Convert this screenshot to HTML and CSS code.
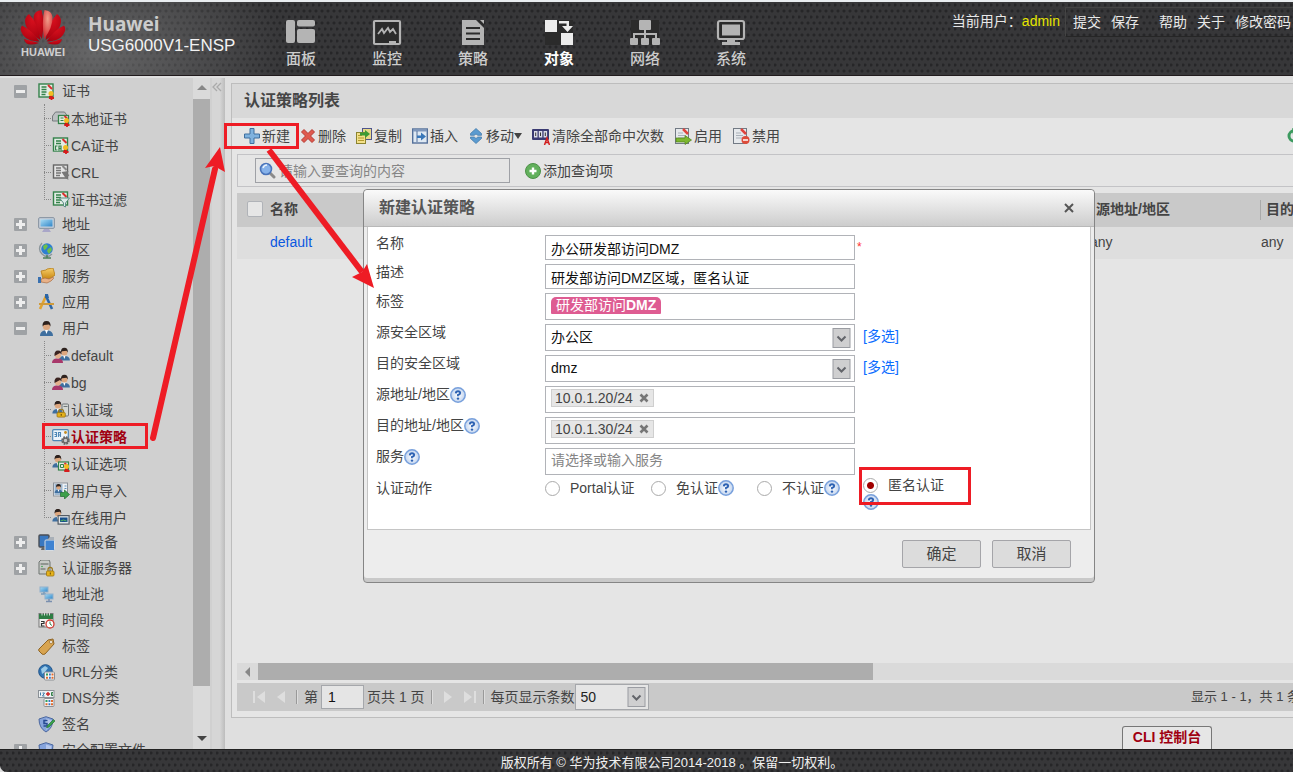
FILE: index.html
```html
<!DOCTYPE html>
<html lang="zh-CN">
<head>
<meta charset="utf-8">
<title>USG6000V1-ENSP</title>
<link rel="stylesheet" href="styles.css">
</head>
<body>
<svg class="defs" aria-hidden="true">
  <defs>
    <radialGradient id="petal" cx="50%" cy="20%" r="90%"><stop offset="0" stop-color="#d8101e"/><stop offset="1" stop-color="#a4000e"/></radialGradient>
    <radialGradient id="petal-hot" cx="50%" cy="30%" r="80%"><stop offset="0" stop-color="#f0a08c"/><stop offset="1" stop-color="#d01824"/></radialGradient>
    <linearGradient id="screen" x1="0" y1="0" x2="1" y2="1"><stop offset="0" stop-color="#a9dcf4"/><stop offset="1" stop-color="#2f86c9"/></linearGradient>
    <linearGradient id="gold" x1="0" y1="0" x2="0" y2="1"><stop offset="0" stop-color="#f7cf6a"/><stop offset="1" stop-color="#c98712"/></linearGradient>
    <radialGradient id="help-bg"><stop offset="0" stop-color="#ffffff"/><stop offset="1" stop-color="#c2d4ee"/></radialGradient>
    <g id="half-flower"><path d="M20.500 32Q5 23 5 13 5 9 9 6 18 15 20.500 32z"/><path d="M19.500 33.500Q7 33 3 27 -1 21 2 17.500 12 22 19.500 33.500z"/><path d="M19 35L4 31Q5 36.500 11 36.500 15 36.500 19 35z"/></g>
    <g id="person"><path d="M1 16q0-5 5-5.500h3q5 .5 5 5.500z" fill="#3f6f9f"/><path d="M6 10l1.500 4L9 10z" fill="#fff"/><circle cx="7.500" cy="6.500" r="3.600" fill="#dda77f"/><path d="M3.600 6.500Q3 1 7.500 1t4 5.500L10 4.500 5 5z" fill="#2d211d"/></g>
    <g id="lock"><path d="M2 4V2.500a2.200 2.200 0 0 1 4.400 0V4" fill="none" stroke="#9a7a20" stroke-width="1.200"/><rect x=".5" y="4" width="7.500" height="5" rx="1" fill="#e5b31c" stroke="#9a7210" stroke-width=".8"/><path d="M4.300 5.500v2" stroke="#6b4c00"/></g>
    <g id="seal"><path d="M3 3l1 5M3 3L2.500 7 1 6.500" stroke="#d51c1c" stroke-width="2"/><circle cx="3" cy="2.600" r="2.500" fill="#f2bd22"/><path d="M1 7h5M3.500 5v4" stroke="#d51c1c" stroke-width="1.800"/></g>
    <g id="sheet"><rect x="1" y="1" width="14" height="13" fill="#e2ece4" stroke="#34824a" stroke-width="1.400"/><path d="M3.500 4h5M3.500 6.500h5M3.500 9h5M3.500 11.500h4" stroke="#34824a" stroke-width="1.300"/></g>
    <g id="grid6"><rect x=".5" y=".5" width="10" height="8" rx="1" fill="#f4f6f7" stroke="#8b8f94"/><path d="M2 3h2" stroke="#2f9e5b" stroke-width="2"/><path d="M5 3h1.800M5 6.300h1.800" stroke="#3a76c4" stroke-width="2"/><path d="M7.500 3h2M7.500 6.300h2M2 6.300h2" stroke="#e06a2c" stroke-width="2"/></g>
    <symbol id="i-cert" viewBox="0 0 17 17"><use href="#sheet"/><path d="M10 2l4 4" stroke="#d93030" stroke-width="2"/><use href="#seal" x="10" y="8"/></symbol>
    <symbol id="i-local" viewBox="0 0 17 17"><path d="M0 6l3-4h9l3 4v5H0z" fill="#bcc0c2" stroke="#777b7e"/><rect x="6" y="5.500" width="10" height="8" fill="#e2ece4" stroke="#34824a" stroke-width="1.300"/><path d="M8 8h3M8 10.500h3" stroke="#34824a"/><path d="M12 6l3 3" stroke="#d93030" stroke-width="2"/><use href="#seal" x="11" y="8"/></symbol>
    <symbol id="i-ca" viewBox="0 0 17 17"><use href="#sheet"/><rect x="2" y="8" width="7" height="6" fill="#e2ece4"/><path d="M5 9H3v4h2M6.500 14V9h2v5M6.500 11.500h2" fill="none" stroke="#34824a" stroke-width="1.200"/><path d="M10 2l4 4" stroke="#d93030" stroke-width="2"/><use href="#seal" x="10" y="8"/></symbol>
    <symbol id="i-crl" viewBox="0 0 17 17"><rect x="1" y="1" width="14" height="13" fill="#e4e4e4" stroke="#666" stroke-width="1.400"/><path d="M3.500 4h5M3.500 6.500h5M3.500 9h5M3.500 11.500h4" stroke="#777" stroke-width="1.300"/><path d="M10 2l4 4" stroke="#888" stroke-width="2"/><path d="M9 8l7-1-1 3 2 1-2 2 1 3-3-2z" fill="#777"/></symbol>
    <symbol id="i-filter" viewBox="0 0 17 17"><use href="#sheet"/><path d="M10 2l4 4" stroke="#d93030" stroke-width="2"/><path d="M7 7h10l-4 5v4l-2-1v-3z" fill="#dcebe8" stroke="#5e8f86"/></symbol>
    <symbol id="i-monitor" viewBox="0 0 17 17"><rect x=".7" y="1.700" width="15.600" height="10.600" rx="1" fill="#c9d3de" stroke="#7f8c9c"/><rect x="2.500" y="3.500" width="12" height="7" fill="url(#screen)"/><path d="M6 13h5l2 3H4z" fill="#a9a6c8"/></symbol>
    <symbol id="i-globe" viewBox="0 0 17 17"><path d="M4 1Q-1 7 4 12t10 0" fill="none" stroke="#8c969c" stroke-width="1.300"/><circle cx="9" cy="7" r="5.800" fill="#2f7fd0"/><path d="M5 4l3-2 2 2-2 3-2 1zM10 7l3-2 1 3-3 4-2-3z" fill="#6fc04a"/><path d="M9 13v3M5 16h8" stroke="#4e7f5a" stroke-width="1.500"/></symbol>
    <symbol id="i-service" viewBox="0 0 17 17"><path d="M3 3l5-1 1-1 6-1 2 7-5 4H5z" fill="url(#gold)" stroke="#b57c18" stroke-width=".8"/><path d="M3 11l4-1 4 1 4-2q2 1-2 4l-4 2-6-1z" fill="#e9b288" stroke="#a86f45" stroke-width=".7"/><path d="M0 9h3v6H0z" fill="#3971b0"/></symbol>
    <symbol id="i-app" viewBox="0 0 17 17"><path d="M8 2L2 15" stroke="#e0a330" stroke-width="2.600"/><path d="M8 2l6 13" stroke="#2c66a6" stroke-width="2.600"/><path d="M1 10h15" stroke="#cf9a3b" stroke-width="2"/><path d="M7 0h3l1 4H7z" fill="#2c66a6"/></symbol>
    <symbol id="i-user" viewBox="0 0 17 17"><use href="#person" x="1"/></symbol>
    <symbol id="i-users" viewBox="0 0 18 17"><g transform="translate(6 0) scale(.85)"><use href="#person"/></g><path d="M0 16q0-4 4-4.500h3q4 .5 4 4.500z" fill="#a8386a"/><circle cx="6" cy="8.500" r="3" fill="#e3b08c"/><path d="M2.500 9Q2 3.500 6 3.500t3.500 4L8 6z" fill="#3b2320"/></symbol>
    <symbol id="i-userlock" viewBox="0 0 17 17"><g transform="translate(-1 -1) scale(.85)"><use href="#person"/></g><rect x="9.500" y="3" width="6.500" height="12" rx="1" fill="#d3d7d3" stroke="#71777a"/><path d="M11 5.500h4" stroke="#71777a"/><g transform="translate(4 8) scale(1.100 .9)"><use href="#lock"/></g></symbol>
    <symbol id="i-policy" viewBox="0 0 18 17"><rect x=".7" y="1.700" width="15.600" height="11" rx="1" fill="#edf4fa" stroke="#4d86b4" stroke-width="1.200"/><path d="M2.500 4.500h2v4h-2M2.500 6.500h2M6.500 9V4.500h2V9M6.500 7h2" fill="none" stroke="#4d86b4" stroke-width="1.100"/><circle cx="13.500" cy="4.500" r="1.400" fill="#c58c22"/><circle cx="13.500" cy="12.500" r="3.300" fill="#c9c9c9" stroke="#666" stroke-width="2" stroke-dasharray="1.700 .9"/><circle cx="13.500" cy="12.500" r="2.400" fill="none" stroke="#666" stroke-width="1.300"/></symbol>
    <symbol id="i-useropt" viewBox="0 0 17 17"><g transform="translate(-1 -1) scale(.85)"><use href="#person"/></g><rect x="6" y="7" width="10" height="8" fill="#e2ece4" stroke="#34824a" stroke-width="1.200"/><path d="M8 9.500h3v3H8z" fill="none" stroke="#34824a"/><path d="M12 8l3 3" stroke="#d93030" stroke-width="2"/><use href="#seal" x="11" y="9"/></symbol>
    <symbol id="i-userimport" viewBox="0 0 17 17"><rect x="1" y="1" width="14" height="13" fill="#eef1f4" stroke="#8b929a"/><rect x="2" y="2" width="8" height="11" fill="#9db7d0"/><g transform="translate(1.500 1.500) scale(.6)"><use href="#person"/></g><path d="M12 4h2M12 6.500h2" stroke="#5a8fc0"/><path d="M8 10.500h4V8l5 4.500-5 4.500v-2.500H8z" fill="#3da04a" stroke="#227030" stroke-width=".7"/></symbol>
    <symbol id="i-useronline" viewBox="0 0 17 17"><g transform="translate(-1 -1) scale(.85)"><use href="#person"/></g><rect x="5.600" y="6.600" width="11" height="8.500" fill="#dfe5ea" stroke="#555c64" stroke-width="1.200"/><rect x="7.500" y="8.500" width="7.500" height="4.500" fill="#174f8c"/><path d="M8 12l3-1 3 1" stroke="#58b85a" fill="none"/></symbol>
    <symbol id="i-devices" viewBox="0 0 17 17"><rect x="1" y="1" width="10" height="12" rx="1" fill="#3a78c0" stroke="#4a4e55" stroke-width="1.400"/><path d="M3 16h5v-3H4z" fill="#666"/><rect x="7" y="6" width="9.500" height="10.500" rx="1" fill="#3f83d2" stroke="#d8dde2"/><path d="M9 6l3-3h4v3" fill="#a9b0b8"/></symbol>
    <symbol id="i-authserver" viewBox="0 0 17 17"><path d="M1 2l2-2h8l1 2v12H1z" fill="#c7cac7" stroke="#6f7471"/><path d="M2.500 4h8M2.500 9h5" stroke="#5b615d" stroke-width="1.200"/><circle cx="4" cy="6.500" r=".8" fill="#39a24c"/><use href="#lock" x="8" y="7"/></symbol>
    <symbol id="i-pool" viewBox="0 0 17 17"><rect x="2" y="1" width="8" height="5" fill="url(#screen)" stroke="#8fb0cc"/><path d="M3 8h5M6 6v2" stroke="#7a9ab8" stroke-width="1.500"/><rect x="7" y="8" width="8" height="5" fill="url(#screen)" stroke="#8fb0cc"/><path d="M8 15.500h6M11 13v2" stroke="#7a8fae" stroke-width="1.500"/></symbol>
    <symbol id="i-calendar" viewBox="0 0 17 17"><rect x="1" y="1.500" width="14" height="13.500" fill="#f1f1ef" stroke="#777"/><path d="M1 2h14v5H1z" fill="#2e7d44"/><path d="M4 .5v3M6.500 .5v3M9 .5v3M11.500 .5v3" stroke="#d6ded8"/><path d="M3 9.500h3v2H3.500v2.500H6.500" fill="none" stroke="#333" stroke-width="1.200"/><circle cx="12" cy="12" r="4" fill="#fff" stroke="#cf3a30" stroke-width="1.300"/><path d="M12 9.500V12l2 1.500" fill="none" stroke="#348048"/></symbol>
    <symbol id="i-tag" viewBox="0 0 17 17"><path d="M1 11L10 2l5-1 1 5-9 10q-2 1-3 0l-3-3q-.8-1 0-2z" fill="#d8a450" stroke="#8f6424"/><circle cx="13" cy="4" r="1.500" fill="#fff" stroke="#8f6424" stroke-width=".7"/></symbol>
    <symbol id="i-url" viewBox="0 0 17 17"><circle cx="7.500" cy="7.500" r="6.800" fill="#3276b4" stroke="#1f5389"/><path d="M3 5l4-3 3 2-3 4-3 2zM9 3l4 1" fill="#9ccbe8"/><use href="#grid6" x="6" y="7.500"/></symbol>
    <symbol id="i-dns" viewBox="0 0 17 17"><rect x=".5" y=".5" width="15.500" height="7" fill="#edf1f3" stroke="#8a9096"/><path d="M2.500 2.500v3M4.500 3h2l-2 3h2" fill="none" stroke="#3d7ba9"/><path d="M8 4h4M10 2v4" stroke="#ce2323" stroke-width="1.400"/><path d="M15 2.500h-1.500v3H15M13.500 4H15" fill="none" stroke="#348048"/><use href="#grid6" x="5.500" y="8"/></symbol>
    <symbol id="i-shield" viewBox="0 0 17 17"><path d="M8 .7l7 2.300q0 9-7 13Q1 12 1 3z" fill="#86a4dc" stroke="#4c689f"/><path d="M8 2.500l5.500 1.800Q13 10 8 14z" fill="#b6c8ec"/></symbol>
    <symbol id="i-sign" viewBox="0 0 17 17"><path d="M8 .7l7 2.300q0 9-7 13Q1 12 1 3z" fill="#86a4dc" stroke="#4c689f"/><path d="M8 2.500l5.500 1.800Q13 10 8 14z" fill="#b6c8ec"/><path d="M9.500 4.500H6V7.500h3V10H5.500" fill="none" stroke="#274a91" stroke-width="1.500"/><path d="M8.500 12l1-2.500 6-6 1.500 1.500-6 6z" fill="#38a04a" stroke="#216b2e" stroke-width=".6"/></symbol>
    <symbol id="i-add" viewBox="0 0 16 16"><path d="M6 .5h4V6h5.500v4H10v5.500H6V10H.5V6H6z" fill="#7fb2de" stroke="#3f6f9e"/></symbol>
    <symbol id="i-del" viewBox="0 0 16 16"><path d="M1.500 4L4 1.500l4 4 4-4L14.500 4l-4 4 4 4-2.500 2.500-4-4-4 4L1.500 12l4-4z" fill="#e05a4e" stroke="#b53a32"/></symbol>
    <symbol id="i-copy" viewBox="0 0 16 16"><rect x="6.500" y=".5" width="9" height="11" fill="#e9d98a" stroke="#4f558c"/><rect x=".5" y="4.500" width="9" height="11" fill="#f3e08a" stroke="#8c8430"/><path d="M2 7.500h4M2 10h6M2 12.500h6" stroke="#b39a2c"/><path d="M4 4.500h5V2l5 4-5 4V7.500H4z" fill="#3d9b35"/></symbol>
    <symbol id="i-insert" viewBox="0 0 16 16"><rect x=".7" y="1" width="14.600" height="14" fill="#dfe9f3" stroke="#54709a" stroke-width="1.400"/><path d="M1 2.500h14" stroke="#8099bd" stroke-width="2"/><path d="M5 3v11" stroke="#54709a"/><path d="M5 7.500h4V4.500l5 4-5 4v-2.500H5z" fill="#3977b8"/></symbol>
    <symbol id="i-move" viewBox="0 0 16 16"><path d="M8 .5l5.500 5v1.800H9.800L8 6 6.200 7.300H2.500V5.500zM8 15.500l5.500-5V9H9.800L8 10.500 6.200 9H2.500v1.500z" fill="#5b9bd0" stroke="#3c76a8" stroke-width=".7"/></symbol>
    <symbol id="i-clear" viewBox="0 0 18 18"><rect x="0" y="2" width="17" height="11" rx="1" fill="#3a3a72"/><path d="M2 4h3.500v6.500H2zM6.800 4h3.500v6.500H6.800zM11.600 4h3.500v6.500h-3.500z" fill="#dcdce8"/><path d="M3.700 5.500v3.500M8.500 5.500v3.500M13.300 5.500v3.500" stroke="#333"/><path d="M12.500 18l2.500-7 2.500 7M13.500 15.500h3" fill="none" stroke="#d11c1c" stroke-width="1.500"/></symbol>
    <g id="doc"><rect x="1.500" y="1.500" width="13" height="15" fill="#e6e9ec" stroke="#727a84"/><path d="M4 6h5M4 8.500h7M4 11h7" stroke="#a9b0b8"/><path d="M9 2l5 5" stroke="#e0443c" stroke-width="2.500"/></g>
    <symbol id="i-enable" viewBox="0 0 18 18"><use href="#doc"/><path d="M2 11h9V8.500l6.500 4.500-6.500 4.500V15H2z" fill="#7db72f" stroke="#4c7f18" stroke-width=".7"/></symbol>
    <symbol id="i-disable" viewBox="0 0 18 18"><use href="#doc"/><circle cx="13.500" cy="13" r="4" fill="#dd4b39"/><path d="M11 13h5" stroke="#fff" stroke-width="1.500"/></symbol>
    <symbol id="i-search" viewBox="0 0 17 17"><path d="M10.500 10.500l4.500 4.500" stroke="#8a8a8a" stroke-width="3" stroke-linecap="round"/><circle cx="7" cy="7" r="5.500" fill="#86b2ea" stroke="#4a74ba" stroke-width="1.600"/><path d="M4 6q1-3 4-3" stroke="#e9f2fd" stroke-width="1.500" fill="none"/></symbol>
    <symbol id="i-plus" viewBox="0 0 16 16"><circle cx="8" cy="8" r="7.500" fill="#62b05c" stroke="#4c9147"/><path d="M8 4.500v7M4.500 8h7" stroke="#fff" stroke-width="2.400"/></symbol>
    <symbol id="i-help" viewBox="0 0 16 16"><circle cx="8" cy="8" r="7.200" fill="url(#help-bg)" stroke="#78a0dc" stroke-width="1.500"/><path d="M5.800 6.300Q6 4.300 8 4.300t2.200 1.700Q10.200 7.300 8 8v1.300" fill="none" stroke="#2d62b3" stroke-width="1.900"/><circle cx="8" cy="11.600" r="1.200" fill="#2d62b3"/></symbol>
    <symbol id="i-chev" viewBox="0 0 18 20"><rect x=".5" y=".5" width="17" height="19" fill="#cfcfd0" stroke="#9a9ca2"/><path d="M5 8.500l4 4 4-4" fill="none" stroke="#63656a" stroke-width="2"/></symbol>
  </defs>
</svg>

<header class="top">
  <div class="brand">
    <svg class="logo" viewBox="0 0 46 48" role="img" aria-label="HUAWEI">
      <g fill="url(#petal)">
        <path d="M22 31Q13 19 13.500 9 14.500 2.500 21.500 2 25 13 22 31z"/>
        <use href="#half-flower"/>
        <use href="#half-flower" transform="translate(46 0) scale(-1 1)"/>
      </g>
      <path fill="url(#petal-hot)" d="M24 31Q33 19 32.500 9 31.500 2.500 24.500 2 21.500 13 24 31z"/>
      <text class="logo-text" x="23" y="48" text-anchor="middle">HUAWEI</text>
    </svg>
    <div><strong class="vendor">Huawei</strong><span class="model">USG6000V1-ENSP</span></div>
  </div>
  <nav class="nav">
    <a href="#"><svg viewBox="0 0 30 28"><g fill="#b4b4b4"><rect y="1" width="9" height="23" rx="2"/><rect x="11" y="1" width="18" height="6.500" rx="2"/><rect x="11" y="10" width="18" height="14" rx="2"/></g></svg>面板</a>
    <a href="#"><svg viewBox="0 0 30 28"><rect x="2" y="2" width="26" height="23" rx="1" fill="#2b2b2b" stroke="#b4b4b4" stroke-width="2.200"/><path d="M6 15l4-5 2 4 4-5 2 4 3-3 3 5" fill="none" stroke="#b4b4b4" stroke-width="1.800"/><path d="M17 25v-3h7v3" fill="#b4b4b4"/></svg>监控</a>
    <a href="#"><svg viewBox="0 0 30 28"><path d="M4 1h14l8 8v17H4z" fill="#b4b4b4"/><path d="M19 1h7v7z" fill="#2b2b2b"/><path d="M22 1h4v4z" fill="#b4b4b4"/><path d="M8 9h14M8 14.500h14M8 20h14" stroke="#2b2b2b" stroke-width="2.200"/></svg>策略</a>
    <a href="#" class="on"><svg viewBox="0 0 30 28"><path d="M1 1h28v25H1z" fill="#2b2b2b"/><g fill="#ececec"><rect x="1" y="1" width="12" height="12"/><rect x="17" y="14" width="12" height="12"/><path d="M15 2h10v5h4l-5.500 6L18 7h4.500V4.500H15z"/></g></svg>对象</a>
    <a href="#"><svg viewBox="0 0 30 28"><path d="M1 1h28v25H1z" fill="#2b2b2b"/><g fill="#b4b4b4"><rect x="9" y="1" width="12" height="10" rx="1"/><rect y="19" width="8" height="7" rx="1"/><rect x="11" y="19" width="8" height="7" rx="1"/><rect x="22" y="19" width="8" height="7" rx="1"/></g><path d="M4 20v-5h22v5M15 10v10" fill="none" stroke="#b4b4b4" stroke-width="2"/></svg>网络</a>
    <a href="#"><svg viewBox="0 0 30 28"><rect x="2" y="2" width="26" height="18" rx="2" fill="#2b2b2b" stroke="#b4b4b4" stroke-width="2.200"/><rect x="6" y="5.500" width="18" height="11" fill="#b4b4b4"/><path d="M11 20h8v3h5v3H6v-3h5z" fill="#b4b4b4"/></svg>系统</a>
  </nav>
  <div class="account">
    <span>当前用户：<a class="who" href="#">admin</a></span>
    <div class="links"><a href="#">提交</a><a href="#">保存</a><a class="help-link" href="#">帮助</a><a href="#">关于</a><a href="#">修改密码</a></div>
  </div>
</header>

<div class="work">
  <aside class="side">
    <ul class="tree">
      <li><div class="node"><button class="tg minus" aria-label="收起"></button><svg><use href="#i-cert"/></svg>证书</div>
        <ul class="sub">
          <li><svg><use href="#i-local"/></svg>本地证书</li>
          <li><svg><use href="#i-ca"/></svg>CA证书</li>
          <li><svg><use href="#i-crl"/></svg>CRL</li>
          <li><svg><use href="#i-filter"/></svg>证书过滤</li>
        </ul></li>
      <li><div class="node"><button class="tg" aria-label="展开"></button><svg><use href="#i-monitor"/></svg>地址</div></li>
      <li><div class="node"><button class="tg" aria-label="展开"></button><svg><use href="#i-globe"/></svg>地区</div></li>
      <li><div class="node"><button class="tg" aria-label="展开"></button><svg><use href="#i-service"/></svg>服务</div></li>
      <li><div class="node"><button class="tg" aria-label="展开"></button><svg><use href="#i-app"/></svg>应用</div></li>
      <li><div class="node"><button class="tg minus" aria-label="收起"></button><svg><use href="#i-user"/></svg>用户</div>
        <ul class="sub">
          <li><svg><use href="#i-users"/></svg>default</li>
          <li><svg><use href="#i-users"/></svg>bg</li>
          <li><svg><use href="#i-userlock"/></svg>认证域</li>
          <li class="current"><svg><use href="#i-policy"/></svg>认证策略</li>
          <li><svg><use href="#i-useropt"/></svg>认证选项</li>
          <li><svg><use href="#i-userimport"/></svg>用户导入</li>
          <li><svg><use href="#i-useronline"/></svg>在线用户</li>
        </ul></li>
      <li><div class="node"><button class="tg" aria-label="展开"></button><svg><use href="#i-devices"/></svg>终端设备</div></li>
      <li><div class="node"><button class="tg" aria-label="展开"></button><svg><use href="#i-authserver"/></svg>认证服务器</div></li>
      <li><div class="node leaf"><svg><use href="#i-pool"/></svg>地址池</div></li>
      <li><div class="node leaf"><svg><use href="#i-calendar"/></svg>时间段</div></li>
      <li><div class="node leaf"><svg><use href="#i-tag"/></svg>标签</div></li>
      <li><div class="node leaf"><svg><use href="#i-url"/></svg>URL分类</div></li>
      <li><div class="node leaf"><svg><use href="#i-dns"/></svg>DNS分类</div></li>
      <li><div class="node leaf"><svg><use href="#i-sign"/></svg>签名</div></li>
      <li><div class="node"><button class="tg" aria-label="展开"></button><svg><use href="#i-shield"/></svg>安全配置文件</div></li>
    </ul>
    <div class="vbar"><span class="tri up"></span><span class="vthumb"></span><span class="tri down"></span></div>
    <div class="split"><button aria-label="折叠"><svg viewBox="0 0 10 10"><path d="M5 1L1 5l4 4M9 1L5 5l4 4" fill="none" stroke="#aaa" stroke-width="1.300"/></svg></button></div>
  </aside>

  <main class="main">
    <section class="panel">
      <h1 class="title">认证策略列表</h1>
      <div class="tools">
        <button><svg><use href="#i-add"/></svg>新建</button>
        <button><svg><use href="#i-del"/></svg>删除</button>
        <button><svg><use href="#i-copy"/></svg>复制</button>
        <button><svg><use href="#i-insert"/></svg>插入</button>
        <button><svg><use href="#i-move"/></svg>移动<span class="drop"></span></button>
        <button class="wide"><svg><use href="#i-clear"/></svg>清除全部命中次数</button>
        <button class="wide"><svg><use href="#i-enable"/></svg>启用</button>
        <button class="wide"><svg><use href="#i-disable"/></svg>禁用</button>
        <button class="refresh" aria-label="刷新"><svg viewBox="0 0 16 16"><path d="M8 3a5 5 0 1 0 5 5" fill="none" stroke="#3c9a5f" stroke-width="3"/><path d="M6 0l7 3-6 4z" fill="#3c9a5f"/></svg></button>
      </div>
      <div class="query">
        <label class="search"><svg><use href="#i-search"/></svg><input type="text" placeholder="请输入要查询的内容" aria-label="查询"></label>
        <button class="add-query"><svg><use href="#i-plus"/></svg>添加查询项</button>
      </div>
      <div class="grid">
        <table>
          <colgroup><col class="c-check"><col class="c-name"><col class="c-src"><col class="c-dst"></colgroup>
          <thead><tr><th><input type="checkbox" aria-label="全选"></th><th>名称</th><th class="src">源地址/地区</th><th class="dst"><span>目的地址/地区</span></th></tr></thead>
          <tbody><tr><td></td><td><a href="#">default</a></td><td>any</td><td>any</td></tr></tbody>
        </table>
      </div>
      <div class="hbar"><span class="tri left"></span><span class="hthumb"></span></div>
      <div class="pager">
        <button aria-label="首页"><svg viewBox="0 0 14 14"><path d="M1 1v12h2V1zM13 1v12L5 7z"/></svg></button>
        <button class="slim" aria-label="上一页"><svg viewBox="0 0 14 14"><path d="M11 1v12L3 7z"/></svg></button>
        <i class="sep"></i>
        <label class="page-no">第<input type="text" value="1"></label>
        <span>页共 1 页</span>
        <i class="sep"></i>
        <button class="slim" aria-label="下一页"><svg viewBox="0 0 14 14"><path d="M3 1v12l8-6z"/></svg></button>
        <button aria-label="末页"><svg viewBox="0 0 14 14"><path d="M1 1v12l8-6zM11 1v12h2V1z"/></svg></button>
        <i class="sep"></i>
        <label class="per-page">每页显示条数<span class="pick"><select><option>50</option></select><svg><use href="#i-chev"/></svg></span></label>
        <span class="total">显示 1 - 1，共 1 条</span>
      </div>
    </section>
    <div class="cli-row"><button class="cli">CLI 控制台</button></div>
  </main>
</div>

<footer class="foot">版权所有 © 华为技术有限公司2014-2018 。保留一切权利。</footer>

<form class="dialog" role="dialog" aria-labelledby="dlg-title">
  <div class="dlg-head"><h2 id="dlg-title">新建认证策略</h2><button type="button" aria-label="关闭"><svg viewBox="0 0 10 10"><path d="M1 1l8 8M9 1L1 9" stroke="#555" stroke-width="2"/></svg></button></div>
  <div class="dlg-body">
    <div class="row"><label for="f-name">名称</label><input id="f-name" type="text" value="办公研发部访问DMZ"><span class="must">*</span></div>
    <div class="row"><label for="f-desc">描述</label><input id="f-desc" type="text" value="研发部访问DMZ区域，匿名认证"></div>
    <div class="row"><span>标签</span><div class="box"><span class="tag">研发部访问<b>DMZ</b></span></div></div>
    <div class="row"><label for="f-sz">源安全区域</label><span class="pick"><select id="f-sz"><option>办公区</option></select><svg><use href="#i-chev"/></svg></span><a href="#">[多选]</a></div>
    <div class="row"><label for="f-dz">目的安全区域</label><span class="pick"><select id="f-dz"><option>dmz</option></select><svg><use href="#i-chev"/></svg></span><a href="#">[多选]</a></div>
    <div class="row"><span class="with-help">源地址/地区<svg><use href="#i-help"/></svg></span><div class="box"><span class="chip">10.0.1.20/24<button type="button" aria-label="移除"><svg viewBox="0 0 10 10"><path d="M1.500 1.500l7 7M8.500 1.500l-7 7" stroke="#777" stroke-width="2.600"/></svg></button></span></div></div>
    <div class="row"><span class="with-help">目的地址/地区<svg><use href="#i-help"/></svg></span><div class="box"><span class="chip">10.0.1.30/24<button type="button" aria-label="移除"><svg viewBox="0 0 10 10"><path d="M1.500 1.500l7 7M8.500 1.500l-7 7" stroke="#777" stroke-width="2.600"/></svg></button></span></div></div>
    <div class="row"><label class="with-help" for="f-svc">服务<svg><use href="#i-help"/></svg></label><input class="svc" id="f-svc" type="text" placeholder="请选择或输入服务"></div>
    <div class="row actions"><span>认证动作</span>
      <div class="radios">
        <label><input type="radio" name="act">Portal认证</label>
        <label><input type="radio" name="act">免认证<svg><use href="#i-help"/></svg></label>
        <label><input type="radio" name="act">不认证<svg><use href="#i-help"/></svg></label>
        <label class="wrap"><input type="radio" name="act" checked>匿名认证<svg><use href="#i-help"/></svg></label>
      </div>
    </div>
  </div>
  <div class="dlg-foot"><button type="button">确定</button><button type="button">取消</button></div>
</form>

<svg class="marks" aria-hidden="true">
  <g fill="none" stroke="#ee1c25" stroke-width="3">
    <rect x="225.500" y="124.500" width="72" height="23"/>
    <rect x="43.500" y="424.500" width="103" height="23"/>
    <rect x="860.500" y="468.500" width="109" height="35"/>
  </g>
  <g stroke="#ee1c25" stroke-width="6" fill="#ee1c25">
    <path d="M153 438L215 169" stroke-linecap="round"/>
    <path d="M269 150L362 272"/>
    <path d="M220 147l-15 21 9-2 11 6z" stroke="none"/>
    <path d="M374 288l-7-24-5 8-10 5z" stroke="none"/>
  </g>
</svg>
</body>
</html>
```

FILE: styles.css
```css
* { box-sizing: border-box; }
html, body { height: 100%; }
body {
  margin: 0;
  display: flex;
  flex-direction: column;
  overflow: hidden;
  position: relative;
  background: #dfdfdf;
  color: #444;
  font: 14px/18px "Liberation Sans", "Noto Sans CJK SC", sans-serif;
}
button, input, select { font: inherit; color: inherit; margin: 0; }
button { border: 0; padding: 0; background: none; cursor: pointer; white-space: nowrap; }
a { color: inherit; text-decoration: none; }
ul { list-style: none; margin: 0; padding: 0; }
svg { display: block; flex: none; }
.defs { position: absolute; width: 0; height: 0; }

/* header */
.top, .foot {
  background-color: #373739;
  background-image:
    radial-gradient(circle at 1px 3px, #262628 1px, transparent 2px),
    radial-gradient(circle at 4px 9px, #262628 1px, transparent 2px);
  background-size: 6px 12px;
}
.top {
  flex: none;
  height: 76px;
  display: flex;
  color: #e8e8e8;
  border-top: 2px solid #e9edf0;
  border-bottom: 1px solid #201a1c;
  background-image:
    radial-gradient(ellipse 190px 120px at 95px 50px, rgba(150,150,150,.5), transparent),
    radial-gradient(circle at 1px 3px, #262628 1px, transparent 2px),
    radial-gradient(circle at 4px 9px, #262628 1px, transparent 2px);
  background-size: auto, 6px 12px, 6px 12px;
}
.brand { flex: none; width: 258px; padding: 6px 0 0 20px; display: flex; gap: 22px; }
.logo { width: 46px; height: 48px; overflow: visible; }
.logo-text { font: bold 11px "Liberation Sans", sans-serif; fill: #cfcfcf; }
.vendor { display: block; margin-top: 4px; font: bold 19px/24px "Noto Sans", sans-serif; color: #ccc; }
.model { display: block; font-size: 17px; line-height: 20px; color: #f2f2f2; }
.nav { display: flex; }
.nav a {
  width: 86px; padding-top: 17px;
  display: flex; flex-direction: column; align-items: center; gap: 2px;
  font-size: 15px; line-height: 20px; font-weight: 500; color: #ccc;
}
.nav svg { width: 30px; height: 28px; }
.nav .on { color: #fff; font-weight: bold; }
.account { margin-left: auto; display: flex; align-items: flex-start; gap: 5px; padding-top: 5px; line-height: 29px; white-space: nowrap; }
.who { color: #e6e600; }
.links { display: flex; gap: 10px; padding: 0 2px 0 7px; height: 30px; border: 1px solid #444; border-right: 0; border-bottom-color: #262626; }
.links .help-link { margin-left: 10px; }

/* work area */
.work { flex: 1; min-height: 0; display: flex; padding-top: 2px; }
.side { flex: none; width: 225px; display: flex; background: #d0d0d0; overflow: hidden; }
.tree { width: 193px; flex: none; white-space: nowrap; }
.node { height: 26px; padding-left: 14px; display: flex; align-items: center; gap: 7px; }
.node svg, .sub svg { width: 17px; height: 17px; }
.leaf { padding-left: 38px; }
.tg {
  width: 13px; height: 13px; margin-right: 4px; border-radius: 1px;
  background:
    linear-gradient(#eee, #eee) center / 9px 3px no-repeat,
    linear-gradient(#eee, #eee) center / 3px 9px no-repeat,
    #9fa2a5;
}
.tg.minus { background: linear-gradient(#eee, #eee) center / 9px 3px no-repeat, #9fa2a5; }
.sub { margin: 0 0 -2px 44px; padding-top: 1px; position: relative; }
.sub::before { content: ""; position: absolute; left: 0; top: 0; bottom: 13px; border-left: 1px dotted #888; }
.sub li { height: 27px; display: flex; align-items: center; gap: 1px; }
.sub li::before { content: ""; width: 7px; border-top: 1px dotted #888; }
.sub svg { width: 18px; }
.sub .current { color: #a00010; font-weight: bold; }
.vbar { width: 17px; display: flex; flex-direction: column; align-items: center; background: #dadada; }
.vthumb { width: 17px; flex: 1; margin: 9px 0 50px; background: #adadad; }
.tri { width: 0; height: 0; border: 5px solid transparent; }
.up { margin-top: 3px; border-bottom-color: #888; border-top-width: 4px; }
.down { border-top-color: #444; margin-bottom: 3px; }
.split { flex: 1; margin-left: 2px; background: linear-gradient(90deg, #d6d6d6 60%, #bcbcbc); }
.split button { width: 10px; height: 18px; display: flex; align-items: center; }
.split svg { width: 10px; height: 10px; }

.main { flex: 1; min-width: 0; display: flex; flex-direction: column; padding: 5px 0 0 6px; }
.panel { flex: 1; min-height: 0; display: flex; flex-direction: column; padding-bottom: 6px; background: #e5e5e5; border: 1px solid #bdbdbd; border-right: 0; }
.title { margin: 0; padding: 1px 12px; font-size: 16px; line-height: 32px; color: #464646; background: #d8d8d8; }
.tools { height: 36px; display: flex; align-items: center; gap: 10px; padding-left: 12px; }
.tools button, .add-query { display: flex; align-items: center; gap: 2px; }
.tools svg { width: 16px; height: 16px; }
.tools .wide svg { width: 18px; height: 18px; }
.drop { border: 4px solid transparent; border-top: 6px solid #444; border-bottom: 0; margin-left: -2px; }
.tools .refresh { margin-left: auto; width: 7px; overflow: hidden; }
.query { height: 33px; margin: 0 0 6px 5px; padding-left: 17px; display: flex; align-items: center; gap: 15px; border: 1px solid #c3c3c6; border-right: 0; }
.search { width: 255px; height: 25px; display: flex; align-items: center; gap: 3px; padding-left: 3px; border: 1px solid #9fa1a6; }
.search svg { width: 17px; height: 17px; }
.search input { flex: 1; min-width: 0; padding: 0; border: 0; background: none; outline: 0; }
::placeholder { color: #858585; opacity: 1; }
.add-query svg { width: 16px; height: 16px; }
.grid { flex: 1; margin-left: 5px; overflow: hidden; }
table { width: 100%; table-layout: fixed; border-collapse: collapse; white-space: nowrap; }
.c-check { width: 28px; }
.c-src { width: 171px; }
.c-dst { width: 32px; }
th { height: 34px; padding: 0 0 2px 5px; text-align: left; color: #444; background: #c9c9c9; }
td { height: 32px; padding: 0 0 2px; background: #dedede; }
th:first-child { padding-left: 10px; }
td:nth-child(2) { padding-left: 5px; }
.src { padding-left: 6px; background: linear-gradient(#aaa, #aaa) right center / 1px 20px no-repeat, #c9c9c9; }
.dst { overflow: hidden; }
.dst span { display: block; line-height: 20px; }
td a { color: #0a57e0; }
input[type=checkbox] { display: block; appearance: none; width: 16px; height: 16px; border: 1px solid #b0b3b8; border-radius: 2px; background: #e6e6e6; }
.hbar { height: 17px; margin: 0 0 3px 5px; display: flex; align-items: center; background: #dadada; }
.left { border-right-color: #888; margin: 0 8px 0 3px; }
.hthumb { width: 615px; height: 17px; background: #adadad; }
.pager { height: 28px; margin-left: 5px; padding-left: 15px; display: flex; align-items: center; gap: 6px; background: #c9c9c9; white-space: nowrap; }
.pager button svg { width: 14px; height: 14px; fill: #dedede; }
.pager .slim { margin: 0 2px; }
.sep { width: 2px; height: 14px; border-left: 1px solid #999; border-right: 1px solid #ddd; }
.page-no { display: flex; align-items: center; gap: 3px; }
.page-no + span { margin-left: -3px; }
.page-no input { width: 43px; height: 24px; padding: 0 6px; border: 1px solid #a5a7ab; background: #e5e5e5; color: #111; }
.per-page { display: flex; align-items: center; }
.total { margin-left: auto; width: 102px; overflow: hidden; font-size: 13px; }
.pick { display: grid; }
.pick select { grid-area: 1 / 1; width: 100%; appearance: none; border: 1px solid #b1b3b8; border-radius: 0; padding: 0 5px; color: #222; background: #fff; }
.pick svg { grid-area: 1 / 1; justify-self: end; align-self: center; margin-right: 3px; width: 19px; height: 20px; pointer-events: none; }
.per-page .pick { width: 74px; }
.per-page select { height: 26px; background: #e5e5e5; border-color: #a5a7ab; }
.cli-row { height: 31px; display: flex; justify-content: flex-end; align-items: flex-end; padding-right: 81px; }
.cli { width: 90px; height: 23px; padding-bottom: 3px; border: 1px solid #777; border-bottom: 0; border-radius: 3px 3px 0 0; color: #a00010; font-weight: bold; background: #e6e6e6; }
.foot { flex: none; height: 23px; padding-left: 51px; font-size: 13px; line-height: 26px; text-align: center; color: #f0f0f0; border-top: 1px solid #222; border-bottom-left-radius: 7px; }

/* dialog */
.dialog {
  position: absolute; left: 363px; top: 189px; width: 732px;
  border: 1px solid #858585; border-radius: 4px; background: #ededed;
  box-shadow: inset 0 -4px #c9c9c9; padding-bottom: 5px;
}
.dlg-head { height: 37px; padding: 0 20px 0 15px; display: flex; align-items: center; justify-content: space-between; border-radius: 4px 4px 0 0; border-bottom: 1px solid #b8b8b8; background: linear-gradient(#fafafa, #cdcdcd); }
.dlg-head h2 { margin: 0; font-size: 16px; line-height: 20px; color: #555; }
.dlg-head svg { width: 10px; height: 10px; }
.dlg-body { margin: 0 3px; padding: 8px; height: 303px; display: flex; flex-direction: column; gap: 4px; background: #fff; border: solid #c5c5c5; border-width: 0 1px 1px; }
.row { display: grid; grid-template-columns: 169px 310px 1fr; min-height: 27px; align-items: start; line-height: 17px; }
.row:nth-child(-n+2) { min-height: 25px; }
.row > input, .box, .row .pick select { width: 310px; height: 27px; border: 1px solid #b1b3b8; padding: 0 5px; background: #fff; color: #111; }
.row:nth-child(-n+2) > input { height: 25px; }
.row .svc { padding-bottom: 3px; }
.row > a { margin-left: 8px; line-height: 24px; color: #0a6cff; }
.row .pick svg { margin-right: 4px; }
.must { margin-left: 2px; font-size: 12px; line-height: 25px; color: #f33; }
.with-help { display: flex; align-items: center; }
.with-help svg, .radios svg { width: 16px; height: 16px; }
.box { display: flex; align-items: flex-start; padding-top: 2px; }
.tag { margin-top: 1px; padding: 0 5px; line-height: 17px; border-radius: 5px 5px 1px 1px; background: #de5c92; color: #fff; }
.chip { display: flex; align-items: center; gap: 6px; height: 18px; padding: 0 4px 0 3px; border: 1px solid #cfcfcf; background: #e6e6e6; color: #444; }
.chip svg { width: 10px; height: 10px; }
.row.actions { grid-template-columns: 169px 1fr; line-height: 18px; }
.radios { display: grid; grid-template-columns: 106px 106px 106px 110px; align-items: start; }
.radios label { display: flex; align-items: center; white-space: nowrap; }
.radios .wrap { flex-wrap: wrap; align-content: flex-start; margin-top: -3px; }
.radios input { appearance: none; width: 15px; height: 15px; margin-right: 10px; border: 1px solid #aaa; border-radius: 50%; background: #fff; }
.radios input:checked { background: radial-gradient(circle, #a00000 3px, transparent 4px), #fff; }
.radios .wrap svg { margin-right: 90px; }
.dlg-foot { display: flex; justify-content: flex-end; gap: 11px; padding: 10px 23px 9px; }
.dlg-foot button { width: 79px; height: 28px; border: 1px solid #a5a5a9; border-radius: 2px; background: #dcdcdc; font-size: 15px; }

/* annotations drawn over the page */
.marks { position: absolute; inset: 0; width: 100%; height: 100%; pointer-events: none; }
```
